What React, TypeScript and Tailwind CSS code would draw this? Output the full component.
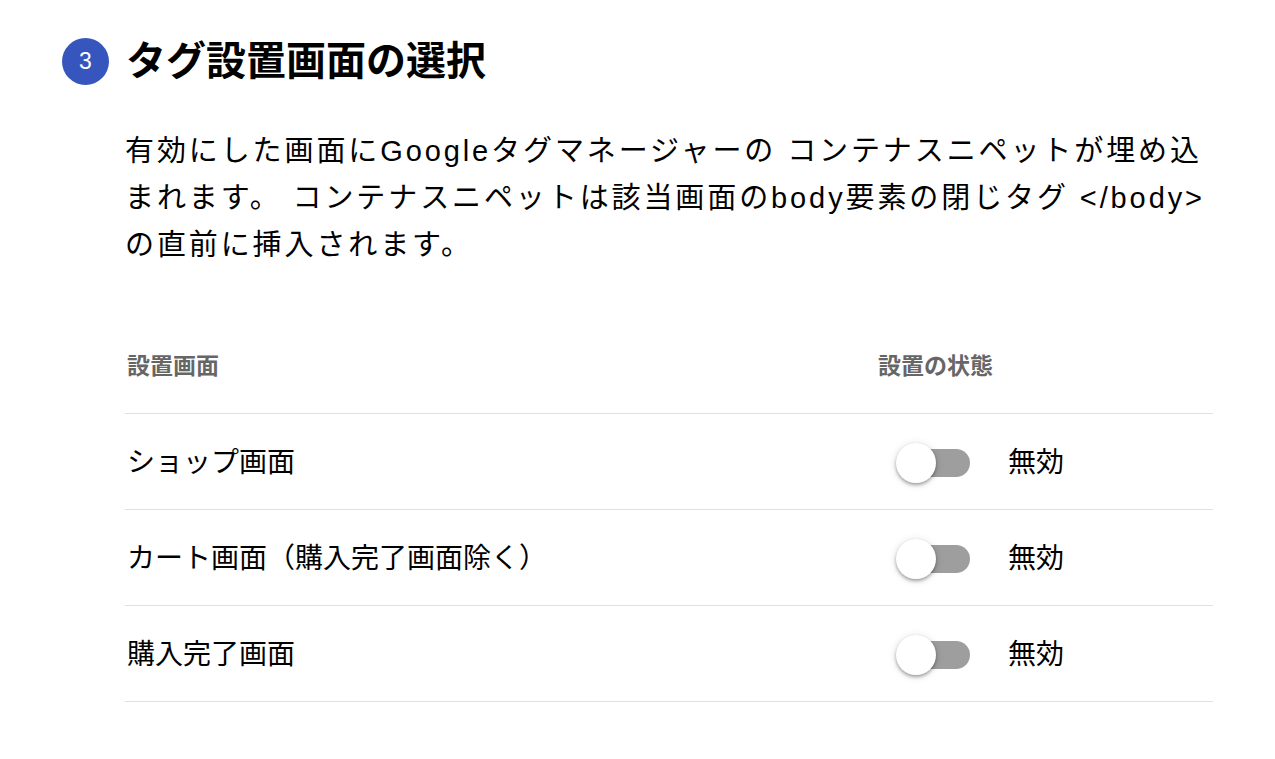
const font = { fontFamily: '"Liberation Sans", "Noto Sans CJK JP", sans-serif' }

function Toggle() {
  return (
    <div className="relative h-[40px] w-[76px]">
      <div className="absolute left-[6px] top-[6px] h-[28px] w-[68px] rounded-full bg-[#9e9e9e]" />
      <div className="absolute left-0 top-0 h-[40px] w-[40px] rounded-full bg-white shadow-[0_2px_3px_rgba(0,0,0,0.2),0_2px_4px_rgba(0,0,0,0.14),0_1px_10px_rgba(0,0,0,0.12)]" />
    </div>
  )
}

const rows = ["ショップ画面", "カート画面（購入完了画面除く）", "購入完了画面"]

export default function App() {
  return (
    <div className="min-h-screen bg-white text-black" style={font}>
      <div className="pl-[62px] pt-[38px]">
        <div className="flex items-center gap-[17px]">
          <div className="flex h-[47px] w-[47px] items-center justify-center rounded-full bg-[#3656bd] text-[23px] text-white">
            3
          </div>
          <h1 className="text-[40px] font-bold leading-[47px]">タグ設置画面の選択</h1>
        </div>

        <div className="ml-[63px] w-[1088px]">
          <p className="mt-[43px] text-[29px] leading-[47px] tracking-[0.1em]">
            有効にした画面にGoogleタグマネージャーの コンテナスニペットが埋め込まれます。 コンテナスニペットは該当画面のbody要素の閉じタグ &lt;/body&gt; の直前に挿入されます。
          </p>

          <table className="mt-[48px] w-full border-collapse">
            <thead>
              <tr className="h-[96px] border-b border-[#e0e0e0] text-left text-[23px] font-bold text-[#666]">
                <th className="w-[753px] pl-[2px] pt-[2px] font-bold">設置画面</th>
                <th className="pt-[2px] font-bold">設置の状態</th>
              </tr>
            </thead>
            <tbody>
              {rows.map((r) => (
                <tr key={r} className="h-[96px] border-b border-[#e0e0e0] text-[28px]">
                  <td className="pl-[2px] pt-[4px]">{r}</td>
                  <td className="pt-[4px]">
                    <div className="flex items-center gap-[36px] pl-[18px]">
                      <Toggle />
                      <span>無効</span>
                    </div>
                  </td>
                </tr>
              ))}
            </tbody>
          </table>
        </div>
      </div>
    </div>
  )
}
